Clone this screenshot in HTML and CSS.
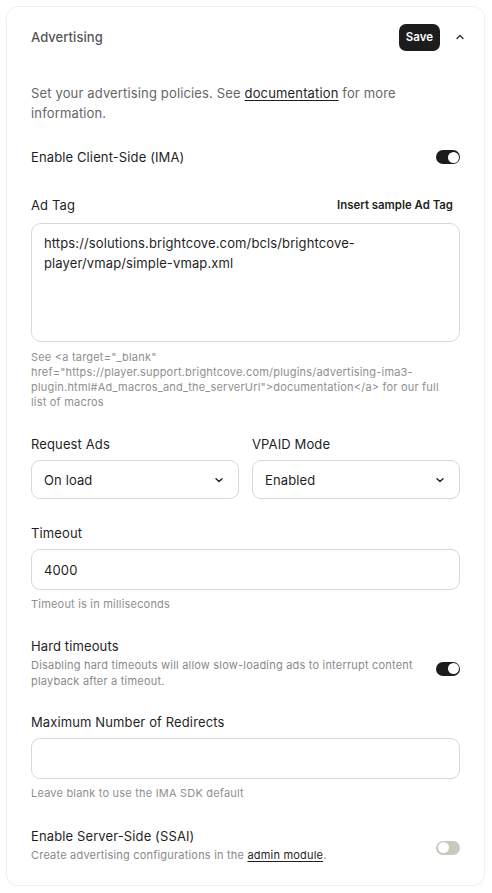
FILE: index.html
```html
<!DOCTYPE html>
<html lang="en">
<head>
<meta charset="utf-8">
<title>Advertising</title>
<link rel="stylesheet" href="styles.css">
</head>
<body>
<section class="card">
  <header class="card-head">
    <h2 class="card-title">Advertising</h2>
    <div class="head-actions">
      <button class="btn-save" type="button">Save</button>
      <span class="chev-up" aria-hidden="true">
        <svg width="16" height="16" viewBox="0 0 16 16"><path d="M5 9.5 L8 6.5 L11 9.5" fill="none" stroke="#333" stroke-width="1.4" stroke-linecap="round" stroke-linejoin="round"/></svg>
      </span>
    </div>
  </header>

  <p class="intro">Set your advertising policies. See <a class="link" href="#">documentation</a> for more information.</p>

  <div class="toggle-row row-ima">
    <span class="label">Enable Client-Side (IMA)</span>
    <span class="switch on"><span class="knob"></span></span>
  </div>

  <div class="field field-adtag">
    <div class="label-row">
      <span class="label">Ad Tag</span>
      <span class="action">Insert sample Ad Tag</span>
    </div>
    <div class="textarea">https://solutions.brightcove.com/bcls/brightcove-player/vmap/simple-vmap.xml</div>
    <p class="help help-macros">See &lt;a target="_blank" href="https://player.support.brightcove.com/plugins/advertising-ima3-plugin.html#Ad_macros_and_the_serverUrl"&gt;documentation&lt;/a&gt; for our full list of macros</p>
  </div>

  <div class="two-col">
    <div class="col">
      <span class="label">Request Ads</span>
      <div class="select"><span>On load</span>
        <svg width="10" height="10" viewBox="0 0 10 10"><path d="M2 3.8 L5 6.6 L8 3.8" fill="none" stroke="#222" stroke-width="1.4" stroke-linecap="round" stroke-linejoin="round"/></svg>
      </div>
    </div>
    <div class="col">
      <span class="label">VPAID Mode</span>
      <div class="select"><span>Enabled</span>
        <svg width="10" height="10" viewBox="0 0 10 10"><path d="M2 3.8 L5 6.6 L8 3.8" fill="none" stroke="#222" stroke-width="1.4" stroke-linecap="round" stroke-linejoin="round"/></svg>
      </div>
    </div>
  </div>

  <div class="field field-timeout">
    <span class="label">Timeout</span>
    <div class="input">4000</div>
    <p class="help">Timeout is in milliseconds</p>
  </div>

  <div class="toggle-row row-hard">
    <div class="toggle-text">
      <span class="label">Hard timeouts</span>
      <p class="desc">Disabling hard timeouts will allow slow-loading ads to interrupt content playback after a timeout.</p>
    </div>
    <span class="switch on"><span class="knob"></span></span>
  </div>

  <div class="field field-redirects">
    <span class="label">Maximum Number of Redirects</span>
    <div class="input"></div>
    <p class="help">Leave blank to use the IMA SDK default</p>
  </div>

  <div class="toggle-row row-ssai">
    <div class="toggle-text">
      <span class="label">Enable Server-Side (SSAI)</span>
      <p class="desc">Create advertising configurations in the <a class="link" href="#">admin module</a>.</p>
    </div>
    <span class="switch off"><span class="knob"></span></span>
  </div>
</section>
</body>
</html>
```

FILE: styles.css
```css
* { box-sizing: border-box; }
html, body { margin: 0; padding: 0; background: #ffffff; }
body {
  font-family: Inter, "Noto Sans", "Liberation Sans", sans-serif;
  color: #1f1f1f;
  -webkit-font-smoothing: antialiased;
}

.card {
  margin: 6px 7px 0 6px;
  width: 479px;
  height: 880px;
  border: 1px solid #efefed;
  border-radius: 12px;
  padding: 16px 24px 0 24px;
  display: flex;
  flex-direction: column;
  box-shadow: 0 1px 2px rgba(0,0,0,0.03);
}

.card-head {
  display: flex;
  align-items: center;
  justify-content: space-between;
  height: 28px;
}
.card-title {
  margin: 0;
  font-size: 13px;
  font-weight: 500;
  color: #555555;
  letter-spacing: 0.05px;
}
.head-actions {
  display: flex;
  align-items: center;
  gap: 12px;
  margin-right: -8px;
}
.btn-save {
  font-family: inherit;
  background: #1c1c1c;
  color: #ffffff;
  border: 0;
  border-radius: 7px;
  height: 27px;
  padding: 0 7px;
  font-size: 11.5px;
  font-weight: 600;
}
.chev-up { display: flex; width: 16px; height: 16px; }

.label {
  font-size: 13px;
  line-height: 20px;
  color: #1f1f1f;
  font-weight: 400;
  letter-spacing: 0.12px;
}
.link { color: #1f1f1f; text-decoration: underline; text-underline-offset: 2px; }

.intro {
  margin: 32px 0 0 0;
  font-size: 13px;
  line-height: 20px;
  color: #666666;
  letter-spacing: 0.15px;
}

.toggle-row {
  display: flex;
  align-items: center;
  justify-content: space-between;
}
.row-ima { margin-top: 24px; }
.row-hard { margin-top: 24px; }
.row-ssai { margin-top: 25px; }
.toggle-text { display: flex; flex-direction: column; }
.desc {
  margin: 1px 0 0 0;
  font-size: 11px;
  line-height: 16px;
  color: #8a8a8a;
  max-width: 395px;
  letter-spacing: 0.2px;
}
.desc .link { color: #1f1f1f; }

.switch {
  position: relative;
  flex: none;
  width: 24px;
  height: 14px;
  border-radius: 7px;
}
.switch.on { background: #1c1c1c; }
.switch.off { background: #c9c8bb; }
.knob {
  position: absolute;
  top: 1.5px;
  width: 11px;
  height: 11px;
  border-radius: 50%;
  background: #ffffff;
}
.switch.on .knob { right: 1.5px; }
.switch.off .knob { left: 1.5px; }
.row-hard .switch { margin-top: 12px; }
.row-ssai .switch { margin-top: 6px; }

.field { display: flex; flex-direction: column; }
.field-adtag { margin-top: 28px; }
.label-row {
  display: flex;
  justify-content: space-between;
  align-items: center;
}
.action {
  font-size: 11.4px;
  font-weight: 600;
  color: #1f1f1f;
  margin-right: 7px;
}
.textarea {
  margin-top: 8px;
  height: 119px;
  border: 1px solid #dad8d0;
  border-radius: 10px;
  padding: 9px 12px;
  font-size: 13px;
  line-height: 20px;
  color: #1f1f1f;
  padding-right: 80px;
  letter-spacing: 0.12px;
}
.help {
  margin: 8px 0 0 0;
  font-size: 11px;
  line-height: 15px;
  color: #8f8f8f;
  letter-spacing: 0.2px;
}
.help-macros { padding-right: 12px; }

.two-col {
  margin-top: 24px;
  display: grid;
  grid-template-columns: 1fr 1fr;
  gap: 13px;
}
.col { display: flex; flex-direction: column; }
.select {
  margin-top: 6px;
  height: 39px;
  border: 1px solid #dad8d0;
  border-radius: 9px;
  padding: 0 14px 0 12px;
  display: flex;
  align-items: center;
  justify-content: space-between;
  font-size: 13px;
  color: #1f1f1f;
  letter-spacing: 0.12px;
}

.field-timeout { margin-top: 24px; }
.field-redirects { margin-top: 23px; }
.input {
  margin-top: 6px;
  height: 41px;
  border: 1px solid #dad8d0;
  border-radius: 9px;
  padding: 0 12px;
  display: flex;
  align-items: center;
  font-size: 13px;
  color: #1f1f1f;
  letter-spacing: 0.12px;
}
.field-timeout .help, .field-redirects .help { margin-top: 7px; }
```
